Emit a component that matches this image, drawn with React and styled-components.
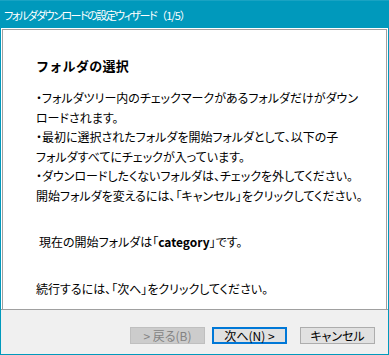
import React from "react";
import styled, { createGlobalStyle } from "styled-components";

const Global = createGlobalStyle`
  html, body { margin: 0; padding: 0; background: #ffffff; }
  * { box-sizing: border-box; }
`;

const Window = styled.div`
  width: 389px;
  height: 355px;
  display: flex;
  flex-direction: column;
  border: 1px solid #0099bc;
  border-top: none;
  background: #ffffff;
  font-family: "Noto Sans CJK JP", "Noto Sans", sans-serif;
`;

const TitleBar = styled.div`
  height: 28px;
  margin: 0 -1px;
  padding-left: 4px;
  display: flex;
  align-items: center;
  background: #0099bc;
  border-top: 1px solid #19a3c3;
  color: #ffffff;
  font-size: 11px;
  letter-spacing: -1.5px;
  font-feature-settings: "palt";
`;

const TitleStep = styled.span`
  font-feature-settings: normal;
  letter-spacing: -1px;
`;

const Panel = styled.div`
  flex: 1;
  display: flex;
  flex-direction: column;
  padding: 1px 1px 0;
  background: #ffffff;
`;

const Inner = styled.div`
  flex: 1;
  border: 1px solid #a0a0a0;
  border-bottom: none;
  padding: 28px 0 0 33px;
  color: #000000;
`;

const Heading = styled.h1`
  margin: 0 0 14px;
  font-size: 13px;
  line-height: 16px;
  font-weight: bold;
  letter-spacing: 0.3px;
`;

const Para = styled.p`
  margin: ${(p) => p.$mt || 0}px 0 0;
  padding-left: ${(p) => p.$indent || 0}px;
  font-size: 12px;
  line-height: 19.5px;
  font-feature-settings: "palt";
  white-space: nowrap;
`;

const Bold = styled.b`
  font-weight: bold;
`;

const Separator = styled.div`
  height: 1px;
  background: #a0a0a0;
`;

const Footer = styled.div`
  height: 44px;
  display: flex;
  justify-content: flex-end;
  align-items: flex-start;
  padding: 17px 13px 0 0;
  background: #f0f0f0;
`;

const Button = styled.button`
  width: 75px;
  height: 17px;
  margin-left: ${(p) => p.$ml || 0}px;
  padding: 0;
  display: flex;
  align-items: center;
  justify-content: center;
  font-family: "Noto Sans CJK JP", "Noto Sans", sans-serif;
  font-size: 12px;
  line-height: 1;
  font-feature-settings: "palt";
  background: ${(p) => (p.disabled ? "#cccccc" : "#e1e1e1")};
  color: ${(p) => (p.disabled ? "#838383" : "#000000")};
  border: ${(p) =>
    p.$default ? "2px solid #0078d7" : p.disabled ? "1px solid #bfbfbf" : "1px solid #adadad"};
`;

export default function App() {
  return (
    <>
      <Global />
      <Window>
        <TitleBar>
          フォルダダウンロードの設定ウィザード<TitleStep>（1/5）</TitleStep>
        </TitleBar>
        <Panel>
          <Inner>
            <Heading>フォルダの選択</Heading>
            <Para>・フォルダツリー内のチェックマークがあるフォルダだけがダウン</Para>
            <Para>ロードされます。</Para>
            <Para>・最初に選択されたフォルダを開始フォルダとして、以下の子</Para>
            <Para>フォルダすべてにチェックが入っています。</Para>
            <Para>・ダウンロードしたくないフォルダは、チェックを外してください。</Para>
            <Para>開始フォルダを変えるには、「キャンセル」をクリックしてください。</Para>
            <Para $mt={27} $indent={3}>
              現在の開始フォルダは「<Bold>category</Bold>」です。
            </Para>
            <Para $mt={27}>続行するには、「次へ」をクリックしてください。</Para>
          </Inner>
        </Panel>
        <Separator />
        <Footer>
          <Button disabled>&gt; 戻る(B)</Button>
          <Button $default $ml={7}>次へ(N) &gt;</Button>
          <Button $ml={13}>キャンセル</Button>
        </Footer>
      </Window>
    </>
  );
}
